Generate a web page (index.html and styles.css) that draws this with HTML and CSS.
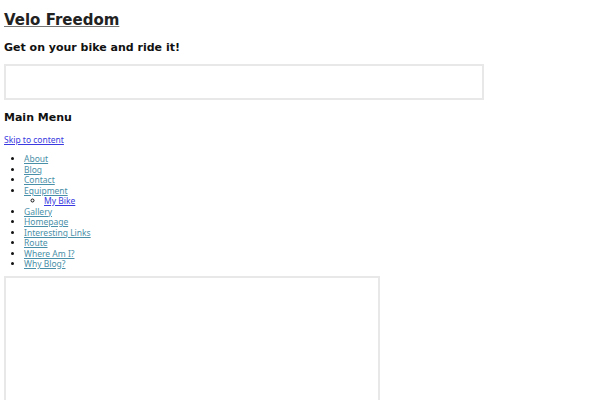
FILE: index.html
```html
<!DOCTYPE html>
<html>
<head>
<meta charset="utf-8">
<link rel="stylesheet" href="styles.css">
</head>
<body>
<header class="site-header">
  <h1 class="site-title"><a href="#">Velo Freedom</a></h1>
  <h2 class="site-desc">Get on your bike and ride it!</h2>
  <div class="banner"></div>
</header>
<nav class="main-nav">
  <h3 class="menu-title">Main Menu</h3>
  <a class="skip" href="#">Skip to content</a>
  <ul class="menu">
    <li><a href="#">About</a></li>
    <li><a href="#">Blog</a></li>
    <li><a href="#">Contact</a></li>
    <li><a href="#">Equipment</a>
      <ul class="sub-menu">
        <li><a href="#">My Bike</a></li>
      </ul>
    </li>
    <li><a href="#">Gallery</a></li>
    <li><a href="#">Homepage</a></li>
    <li><a href="#">Interesting Links</a></li>
    <li><a href="#">Route</a></li>
    <li><a href="#">Where Am I?</a></li>
    <li><a href="#">Why Blog?</a></li>
  </ul>
</nav>
<div class="content-box"></div>
</body>
</html>
```
FILE: styles.css
```css
html, body {
  margin: 0;
  padding: 0;
  background: #fff;
}
body {
  padding: 10px 4px 0;
  font-family: "DejaVu Sans", sans-serif;
  color: #111;
}
.site-title {
  margin: 0;
  font-size: 15px;
  line-height: 20px;
  font-weight: bold;
}
.site-title a {
  color: #222;
  text-decoration: underline;
  text-decoration-color: #777;
}
.site-desc {
  margin: 11px 0 0;
  font-size: 11px;
  line-height: 14px;
  font-weight: bold;
}
.banner {
  margin-top: 9px;
  width: 476px;
  height: 32px;
  border: 2px solid #e8e8e8;
}
.menu-title {
  margin: 11px 0 0;
  font-size: 11px;
  line-height: 14px;
  font-weight: bold;
}
.skip {
  display: inline-block;
  margin-top: 9px;
  font-family: "Noto Sans", sans-serif;
  font-size: 8.5px;
  line-height: 11px;
  color: #3a3ae0;
}
.menu {
  margin: 7px 0 0;
  padding-left: 20px;
  font-family: "Noto Sans", sans-serif;
  font-size: 8.5px;
  line-height: 10.5px;
  list-style: disc;
}
.menu a {
  color: #4a8fa8;
}
.sub-menu {
  margin: 0;
  padding-left: 20px;
  list-style: circle;
}
.sub-menu a {
  color: #3a3ae0;
}
.content-box {
  margin-top: 6px;
  width: 372px;
  height: 200px;
  border: 2px solid #e8e8e8;
}
```
